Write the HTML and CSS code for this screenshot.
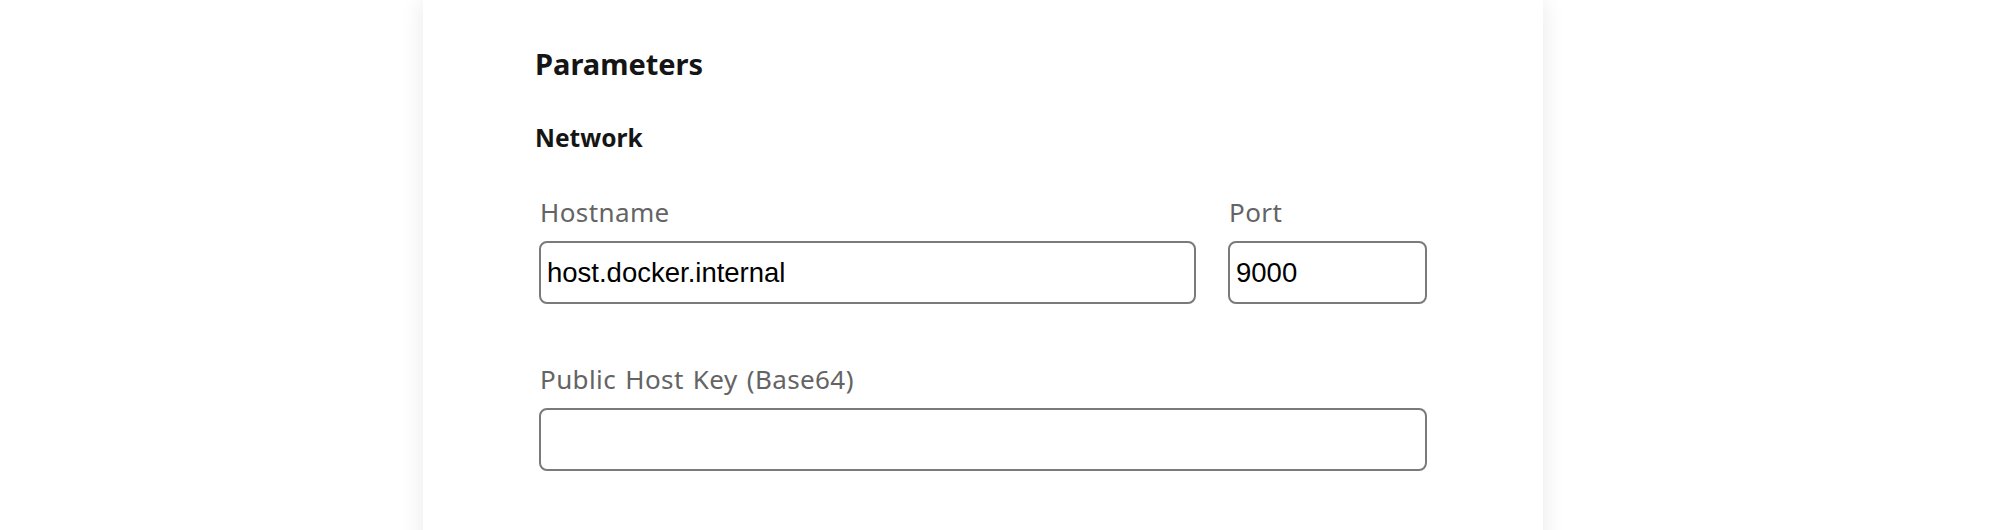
FILE: index.html
```html
<!DOCTYPE html>
<html lang="en">
<head>
<meta charset="utf-8">
<title>Parameters</title>
<link rel="stylesheet" href="styles.css">
</head>
<body>
<main class="card">
  <section class="content">
    <h2 class="title">Parameters</h2>
    <h3 class="subtitle">Network</h3>
    <div class="row">
      <div class="field field-host">
        <label class="label" for="host">Hostname</label>
        <input class="input" id="host" type="text" value="host.docker.internal">
      </div>
      <div class="field field-port">
        <label class="label" for="port">Port</label>
        <input class="input" id="port" type="text" value="9000">
      </div>
    </div>
    <div class="field field-key">
      <label class="label" for="key">Public Host Key (Base64)</label>
      <input class="input" id="key" type="text" value="">
    </div>
  </section>
</main>
</body>
</html>
```

FILE: styles.css
```css
html, body {
  margin: 0;
  padding: 0;
  background: #ffffff;
  height: 530px;
  overflow: hidden;
}

.card {
  margin-left: 423px;
  width: 1120px;
  min-height: 620px;
  background: #ffffff;
  box-shadow: 0 0 22px rgba(0, 0, 0, 0.09);
  box-sizing: border-box;
  padding: 45px 0 0 112px;
}

.content {
  width: 896px;
  font-family: "Noto Sans", "Open Sans", sans-serif;
}

.title {
  margin: 0;
  font-size: 29px;
  line-height: 38px;
  font-weight: 700;
  color: #151515;
}

.subtitle {
  margin: 38px 0 0 0;
  font-size: 24.5px;
  line-height: 33px;
  font-weight: 700;
  color: #151515;
}

.row {
  display: flex;
  gap: 32px;
  margin-top: 41px;
  padding-left: 4px;
}

.field {
  display: flex;
  flex-direction: column;
}

.field-host { width: 657px; }
.field-port { width: 199px; }

.field-key {
  width: 888px;
  margin-top: 58px;
  margin-left: 4px;
}

.label {
  font-size: 26px;
  line-height: 34px;
  letter-spacing: 0.4px;
  word-spacing: 2px;
  color: #646464;
  margin-bottom: 12px;
  padding-left: 1px;
}

.input {
  box-sizing: border-box;
  width: 100%;
  height: 63px;
  border: 2px solid #7a7a7a;
  border-radius: 8px;
  padding: 0 6px;
  font-family: "Liberation Sans", Arial, sans-serif;
  font-size: 27.5px;
  color: #000000;
  background: #ffffff;
  outline: none;
}
```
